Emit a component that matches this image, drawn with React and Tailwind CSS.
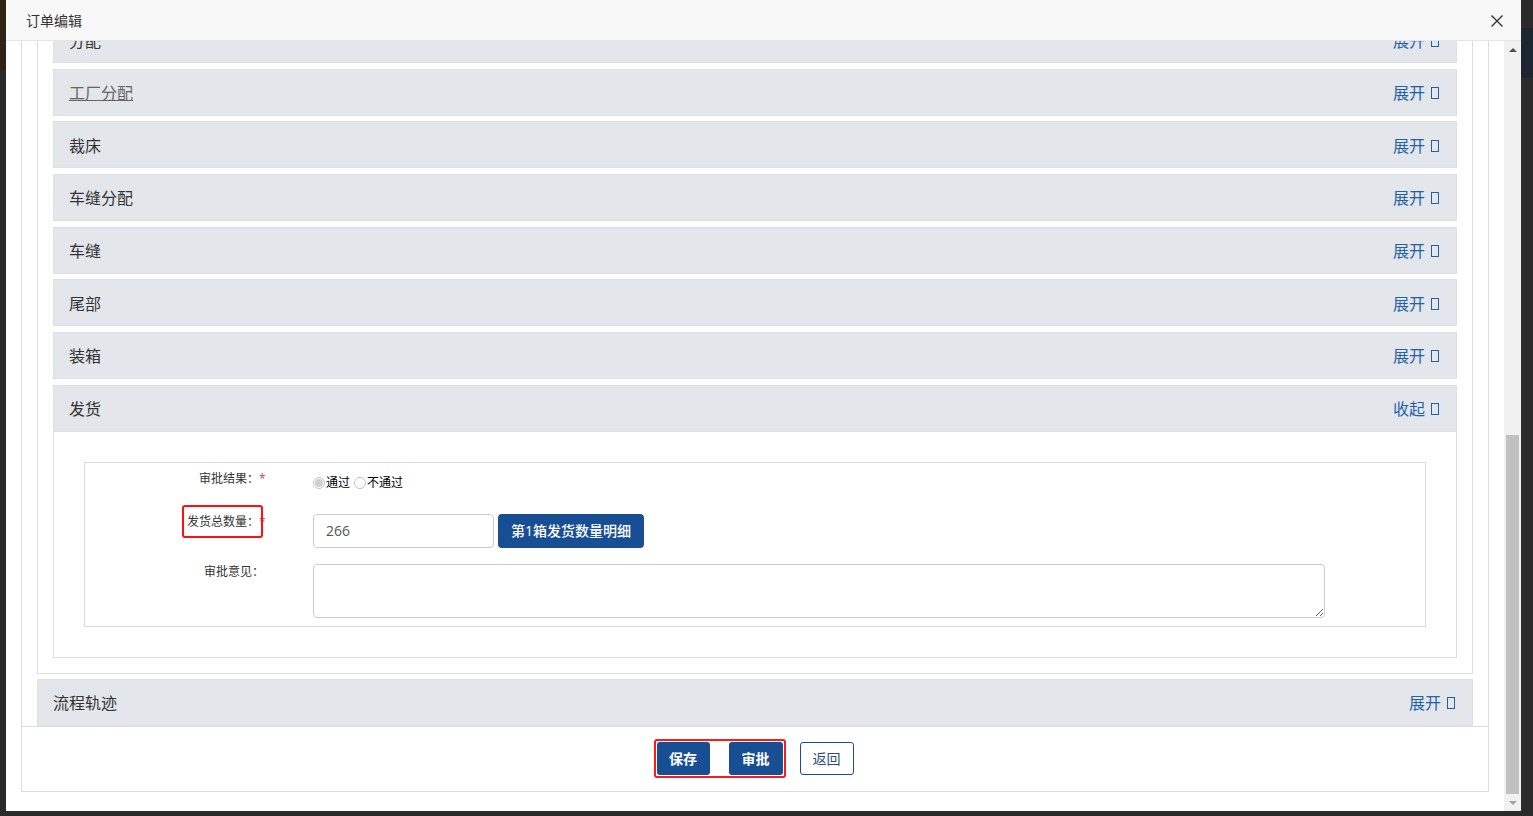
import React from 'react';

const panels = [
  { title: '分配' },
  { title: '工厂分配', link: true },
  { title: '裁床' },
  { title: '车缝分配' },
  { title: '车缝' },
  { title: '尾部' },
  { title: '装箱' },
];

// the "missing icon" box that follows 展开 / 收起
const Tofu = () => (
  <span className="inline-block w-[8px] h-[12px] border border-[#2461a8] ml-[6px] align-[-1px]"></span>
);

const PanelHeader = ({ title, link, action = '展开', className = '' }) => (
  <div
    className={`h-[47px] flex items-center justify-between pl-[15px] pr-[17px] pt-[2px] bg-[#e3e6eb] border border-[#dde0e5] ${className}`}
  >
    <span className={`text-[16px] ${link ? 'text-[#666] underline' : 'text-[#333]'}`}>{title}</span>
    <span className="text-[16px] text-[#2461a8] flex items-center">
      {action}
      <Tofu />
    </span>
  </div>
);

const Radio = ({ checked }) => (
  <span className="inline-flex w-[12px] h-[12px] rounded-full border border-[#c4c4c4] bg-white items-center justify-center mr-[1px]">
    {checked && <span className="w-[8px] h-[8px] rounded-full bg-[#cfcfcf]"></span>}
  </span>
);

const Label = ({ children, required, marked }) => (
  <div className="flex shrink-0">
    <div className={`text-right text-[12px] leading-4 text-[#333] ${required ? 'w-[174px]' : 'w-[179px]'}`}>
      {marked ? (
        <span className="relative">
          {children}
          <span className="absolute -top-[8px] -bottom-[8px] -left-[5px] -right-[4px] border-2 border-[#ff1010] rounded-[3px] z-10"></span>
        </span>
      ) : (
        children
      )}
    </div>
    <div className={`text-[12px] leading-4 text-[#e4393c] ${required ? 'w-[54px]' : 'w-[49px]'}`}>
      {required ? '*' : ''}
    </div>
  </div>
);

const ShippingForm = () => (
  <div className="border border-[#dcdcdc] pt-[8px] pb-[8px]">
    <div className="flex h-[43px]">
      <Label required>审批结果：</Label>
      <div className="mt-[4px] flex items-center text-[12px] leading-4 text-black h-[16px]">
        <Radio checked />
        <span>通过</span>
        <span className="w-[4px]"></span>
        <Radio />
        <span>不通过</span>
      </div>
    </div>
    <div className="flex mb-[16px]">
      <Label required marked>发货总数量：</Label>
      <input
        defaultValue="266"
        className="w-[181px] h-[34px] border border-[#ccc] rounded-[4px] pl-[12px] text-[14px] text-[#555] outline-none"
      />
      <button className="ml-[4px] h-[34px] w-[146px] rounded-[4px] bg-[#174e94] text-white text-[14px] font-medium">
        第1箱发货数量明细
      </button>
    </div>
    <div className="flex">
      <Label>审批意见：</Label>
      <textarea className="w-[1012px] h-[54px] border border-[#ccc] rounded-[4px] outline-none"></textarea>
    </div>
  </div>
);

const Scrollbar = () => (
  <div className="w-[17px] bg-[#f1f1f1] flex flex-col">
    <div className="h-[17px] flex items-center justify-center">
      <span className="w-0 h-0 border-x-[4px] border-x-transparent border-b-[4px] border-b-[#505050]"></span>
    </div>
    <div className="flex-1 flex flex-col justify-end">
      <div className="h-[359px] mx-[2px] bg-[#c1c1c1]"></div>
    </div>
    <div className="h-[17px] flex items-center justify-center">
      <span className="w-0 h-0 border-x-[4px] border-x-transparent border-t-[4px] border-t-[#a3a3a3]"></span>
    </div>
  </div>
);

const App = () => {
  return (
    <div className="w-[1533px] h-[816px] bg-[#2b2b2b] flex overflow-hidden font-['Open_Sans','Noto_Sans_CJK_SC',sans-serif]">
      <div className="w-[6px] flex flex-col">
        <div className="h-[70px] bg-[#2e2415]"></div>
      </div>

      <div className="w-[1515px] h-[811px] bg-white flex flex-col">
        {/* dialog title bar */}
        <div className="h-[41px] shrink-0 bg-[#f8f8f8] border-b border-[#e5e5e5] flex items-center justify-between pl-[20px] pr-[17px]">
          <span className="text-[14px] text-[#333]">订单编辑</span>
          <svg width="14" height="14" viewBox="0 0 14 14" className="mt-[1px]">
            <path d="M1.5 1.5 L12.5 12.5 M12.5 1.5 L1.5 12.5" stroke="#333" strokeWidth="1.4" fill="none" />
          </svg>
        </div>

        <div className="flex-1 flex min-h-0">
          {/* scrolled content */}
          <div className="flex-1 overflow-hidden px-[15px]">
            <div className="mt-[-57px] border border-[#dddddd]">
              <div className="px-[15px] pt-[15px]">
                <div className="border border-[#dddddd] px-[15px] pt-[15px] pb-[15px]">
                  {panels.map((p) => (
                    <PanelHeader key={p.title} title={p.title} link={p.link} className="mb-[5.67px]" />
                  ))}
                  <PanelHeader title="发货" action="收起" />
                  <div className="border-x border-b border-[#dde0e5] p-[30px]">
                    <ShippingForm />
                  </div>
                </div>
                <PanelHeader title="流程轨迹" className="mt-[5px]" />
              </div>
              <div className="h-[65px] border-t border-[#dddddd] flex items-center justify-center pr-[3px]">
                <div className="flex gap-[19px] border-2 border-[#ff1a1a] rounded-[3px] p-[1px]">
                  <button className="w-[53px] h-[33px] rounded-[3px] bg-[#174e94] text-white text-[14px] font-bold">
                    保存
                  </button>
                  <button className="w-[54px] h-[33px] rounded-[3px] bg-[#174e94] text-white text-[14px] font-bold">
                    审批
                  </button>
                </div>
                <button className="ml-[14px] w-[54px] h-[33px] rounded-[3px] bg-white border border-[#174e94] text-[#2b4c7e] text-[14px]">
                  返回
                </button>
              </div>
            </div>
          </div>
          <Scrollbar />
        </div>
      </div>

      <div className="w-[12px] flex flex-col">
        <div className="h-[28px]"></div>
        <div className="h-[50px] bg-[#1c2530]"></div>
      </div>
    </div>
  );
};

export default App;
